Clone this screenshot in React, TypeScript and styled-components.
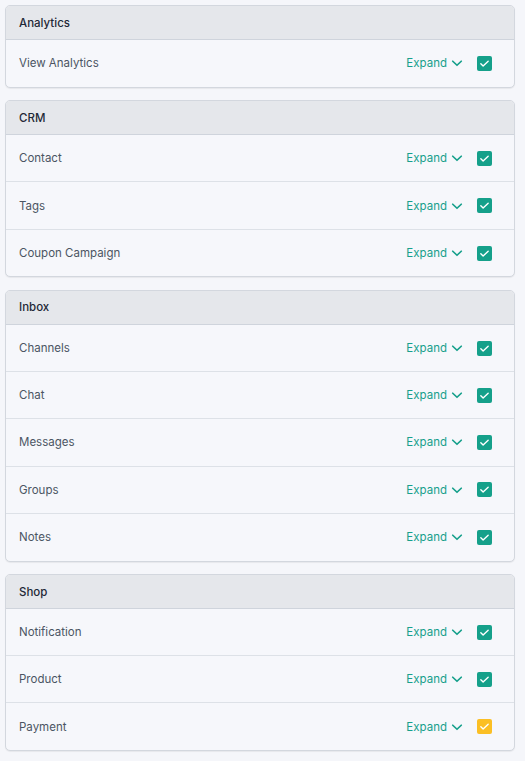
import React from "react";
import styled, { createGlobalStyle } from "styled-components";

const Global = createGlobalStyle`
  html, body { margin: 0; padding: 0; background: #f5f6fa; }
  body { font-family: Inter, "Noto Sans", Arial, sans-serif; }
  * { box-sizing: border-box; }
`;

const Page = styled.div`
  display: flex;
  flex-direction: column;
  gap: 12.5px;
  padding: 5px 10px 10px 5px;
  width: 525px;
`;

const Card = styled.section`
  background: #f6f7fb;
  border: 1px solid #d3d7de;
  border-radius: 5px;
  box-shadow: 0 1px 1px rgba(0, 0, 0, 0.06);
  overflow: hidden;
`;

const Header = styled.div`
  height: 34px;
  display: flex;
  align-items: center;
  padding: 0 13px;
  background: #e5e7eb;
  border-bottom: 1px solid #cfd4dc;
  font-size: 11.5px;
  font-weight: 500;
  color: #1f2937;
`;

const Row = styled.div<{ $last?: boolean }>`
  height: ${(p) => (p.$last ? "46.8px" : "47.2px")};
  display: flex;
  align-items: center;
  padding: 0 22px 0 13px;
  border-bottom: ${(p) => (p.$last ? "none" : "1px solid #dde1e7")};
  font-size: 11.5px;
  color: #4b5563;
`;

const Label = styled.span`
  flex: 1;
`;

const ExpandButton = styled.button`
  display: flex;
  align-items: center;
  gap: 4px;
  border: none;
  background: none;
  padding: 0;
  margin-right: 14px;
  font-family: inherit;
  font-size: 11.5px;
  font-weight: 400;
  color: #17a08c;
  cursor: pointer;
`;

const Box = styled.span<{ $color: string }>`
  width: 15px;
  height: 15px;
  border-radius: 2px;
  background: ${(p) => p.$color};
  display: inline-flex;
  align-items: center;
  justify-content: center;
`;

const Chevron = () => (
  <svg width="12" height="12" viewBox="0 0 24 24" fill="none" stroke="currentColor" strokeWidth="3.4" strokeLinecap="round" strokeLinejoin="round">
    <path d="M3.5 8.5l8.5 8L20.5 8.5" />
  </svg>
);

const Check = () => (
  <svg width="11" height="11" viewBox="0 0 24 24" fill="none" stroke="#fff" strokeWidth="3" strokeLinecap="round" strokeLinejoin="round">
    <path d="M4 12.5l5 5L20 7" />
  </svg>
);

type Item = { name: string; color?: string };
const groups: { title: string; items: Item[] }[] = [
  { title: "Analytics", items: [{ name: "View Analytics" }] },
  { title: "CRM", items: [{ name: "Contact" }, { name: "Tags" }, { name: "Coupon Campaign" }] },
  {
    title: "Inbox",
    items: [{ name: "Channels" }, { name: "Chat" }, { name: "Messages" }, { name: "Groups" }, { name: "Notes" }],
  },
  {
    title: "Shop",
    items: [{ name: "Notification" }, { name: "Product" }, { name: "Payment", color: "#fbbf24" }],
  },
];

export default function App() {
  return (
    <>
      <Global />
      <Page>
        {groups.map((g) => (
          <Card key={g.title}>
            <Header>{g.title}</Header>
            {g.items.map((it, i) => (
              <Row key={it.name} $last={i === g.items.length - 1}>
                <Label>{it.name}</Label>
                <ExpandButton>
                  Expand <Chevron />
                </ExpandButton>
                <Box $color={it.color ?? "#15a08a"}>
                  <Check />
                </Box>
              </Row>
            ))}
          </Card>
        ))}
      </Page>
    </>
  );
}
